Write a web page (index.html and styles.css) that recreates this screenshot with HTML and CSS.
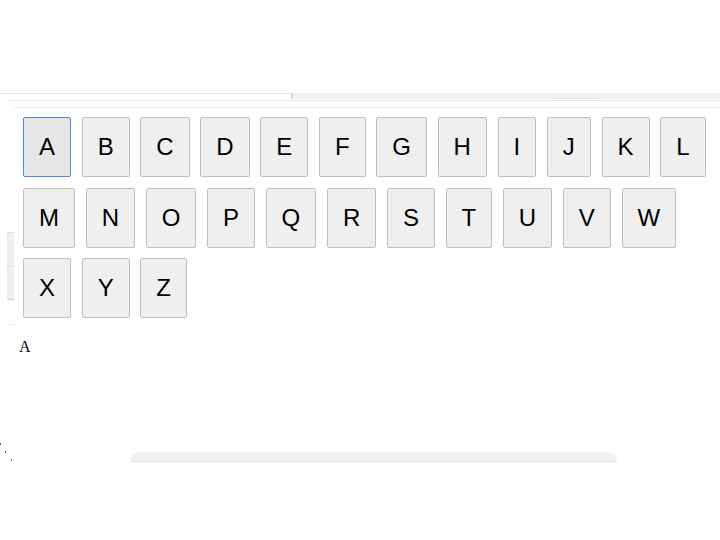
FILE: index.html
```html
<!DOCTYPE html>
<html lang="en">
<head>
<meta charset="utf-8">
<title>Alphabet keys</title>
<link rel="stylesheet" href="styles.css">
</head>
<body>
<div class="spacer"></div>
<div class="tabs">
  <div class="tab-left"></div>
  <div class="tab-right"><span class="tab-mark"></span></div>
</div>
<div class="rule rule-1"></div>
<div class="rule rule-2"></div>
<div class="main">
  <div class="gutter">
    <div class="side-box"><div class="side-cell"></div><div class="side-cell"></div></div>
    <div class="side-line"></div>
  </div>
  <div class="keyboard">
    <button class="key key-active">A</button>
    <button class="key">B</button>
    <button class="key">C</button>
    <button class="key">D</button>
    <button class="key">E</button>
    <button class="key">F</button>
    <button class="key">G</button>
    <button class="key">H</button>
    <button class="key">I</button>
    <button class="key">J</button>
    <button class="key">K</button>
    <button class="key">L</button>
    <button class="key">M</button>
    <button class="key">N</button>
    <button class="key">O</button>
    <button class="key">P</button>
    <button class="key">Q</button>
    <button class="key">R</button>
    <button class="key">S</button>
    <button class="key">T</button>
    <button class="key">U</button>
    <button class="key">V</button>
    <button class="key">W</button>
    <button class="key">X</button>
    <button class="key">Y</button>
    <button class="key">Z</button>
  </div>
</div>
<div class="output">A</div>
<div class="bottom">
  <svg class="marks" width="14" height="20" viewBox="0 0 14 20">
    <rect x="0" y="0" width="1" height="2" fill="#1a7a8a"/>
    <rect x="5" y="8" width="1" height="2" fill="#1a6a7a"/>
    <rect x="11" y="16" width="1" height="2" fill="#1a8a9a"/>
  </svg>
  <div class="tray"></div>
</div>
</body>
</html>
```
FILE: styles.css
```css
html, body {
  margin: 0;
  padding: 0;
  background: #ffffff;
}
body {
  font-family: "Liberation Serif", "Times New Roman", serif;
  font-size: 16px;
  color: #000;
  width: 720px;
  overflow: hidden;
}
.spacer {
  height: 93px;
}
.tabs {
  display: flex;
  height: 6px;
}
.tab-left {
  width: 291px;
  border-top: 1px solid #e6e6e6;
}
.tab-right {
  flex: 1;
  background: #f1f1f1;
  border-left: 2px solid #dcdcdc;
  position: relative;
}
.tab-mark {
  position: absolute;
  left: 262px;
  bottom: 0;
  width: 42px;
  height: 1px;
  background: #e2e2e2;
}
.rule {
  border-top: 1px solid #e9e9e9;
}
.rule-1 {
  margin-top: 1px;
  margin-left: 7px;
}
.rule-2 {
  margin-top: 6px;
  margin-left: 14px;
}
.main {
  display: flex;
  margin-top: 9px;
}
.gutter {
  width: 23px;
  flex: none;
  padding-top: 115px;
}
.side-box {
  margin-left: 7px;
  width: 7px;
  display: flex;
  flex-direction: column;
}
.side-cell {
  height: 33px;
  background: #eff1ef;
  border-top: 1px solid #dedede;
}
.side-cell + .side-cell {
  border-bottom: 1px solid #cfcfcf;
  height: 32px;
}
.side-line {
  margin-left: 7px;
  margin-top: 24px;
  width: 7px;
  border-top: 1px solid #eeeeee;
}
.keyboard {
  flex: 1;
  display: flex;
  flex-wrap: wrap;
  column-gap: 10.65px;
  row-gap: 10.5px;
  align-content: flex-start;
}
.key {
  height: 60px;
  padding: 0 15px;
  margin: 0;
  font-family: "Liberation Sans", Arial, sans-serif;
  font-size: 24px;
  color: #000;
  background: #efefef;
  border: 1px solid #bfbfbf;
  border-radius: 2px;
  line-height: 1;
}
.key-active {
  background: #e6e6e6;
  border-color: #4f86d9;
}
.output {
  margin-top: 13px;
  padding-left: 19px;
}
.bottom {
  display: flex;
  margin-top: 87px;
}
.marks {
  flex: none;
}
.tray {
  margin-left: 116px;
  margin-top: 9px;
  width: 487px;
  height: 9px;
  background: #f1f1f1;
  border-bottom: 1px solid #e2e2e2;
  border-radius: 14px 14px 0 0;
}
```
